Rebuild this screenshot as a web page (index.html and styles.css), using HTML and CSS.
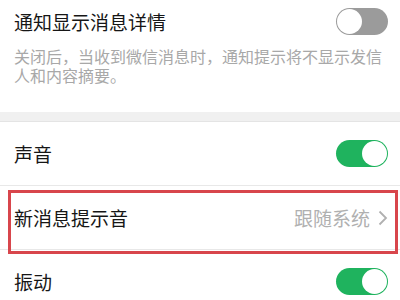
FILE: index.html
```html
<!DOCTYPE html>
<html lang="zh-CN">
<head>
<meta charset="utf-8">
<title>新消息通知</title>
<link rel="stylesheet" href="styles.css">
</head>
<body>
<div class="screen">
  <section class="group first">
    <div class="row-top">
      <span class="label">通知显示消息详情</span>
      <span class="switch off"></span>
    </div>
    <p class="desc">关闭后，当收到微信消息时，通知提示将不显示发信人和内容摘要。</p>
  </section>
  <div class="gap"></div>
  <section class="group">
    <div class="row">
      <span class="label">声音</span>
      <span class="switch on"></span>
    </div>
    <div class="row">
      <span class="label">新消息提示音</span>
      <span class="value">跟随系统
        <svg class="chev" width="10" height="16" viewBox="0 0 10 16"><polyline points="1.5,1.5 8,8 1.5,14.5" fill="none" stroke="#b0b0b0" stroke-width="1.8"/></svg>
      </span>
    </div>
    <div class="row">
      <span class="label">振动</span>
      <span class="switch on"></span>
    </div>
  </section>
  <div class="highlight"></div>
</div>
</body>
</html>
```

FILE: styles.css
```css
* { box-sizing: border-box; }
html, body { margin: 0; padding: 0; background: #fff; }
body {
  font-family: "Noto Sans CJK SC", "Noto Sans", sans-serif;
  width: 400px;
  height: 300px;
  overflow: hidden;
}
.screen { position: relative; width: 400px; height: 300px; overflow: hidden; }
.group.first { padding: 8px 12px 27px 14px; }
.row-top {
  display: flex;
  align-items: center;
  justify-content: space-between;
  height: 27px;
}
.label {
  font-size: 19px;
  line-height: 27px;
  color: #161616;
}
.desc {
  margin: 12px 6px 0 0;
  font-size: 16px;
  line-height: 19px;
  color: #a8a8a8;
}
.gap {
  height: 10px;
  background: #f0f0f0;
  border-bottom: 1px solid #e4e4e4;
}
.row {
  display: flex;
  align-items: center;
  justify-content: space-between;
  height: 64px;
  padding: 0 12px 0 14px;
  border-bottom: 1px solid #e8e8e8;
}
.value {
  display: flex;
  align-items: center;
  gap: 8px;
  font-size: 19px;
  color: #b0b0b0;
  line-height: 27px;
}
.chev { display: block; margin-top: 1px; }
.switch {
  position: relative;
  width: 52px;
  height: 27px;
  border-radius: 14px;
  display: block;
}
.switch::after {
  content: "";
  position: absolute;
  top: 1px;
  width: 25px;
  height: 25px;
  border-radius: 50%;
  background: #fff;
}
.switch.off { background: #9b9b9b; }
.switch.off::after { left: 1px; }
.switch.on { background: #1fb35e; }
.switch.on::after { right: 1px; }
.highlight {
  position: absolute;
  left: 8px;
  top: 190px;
  width: 390px;
  height: 64px;
  border: 3px solid #d8464c;
}
```
